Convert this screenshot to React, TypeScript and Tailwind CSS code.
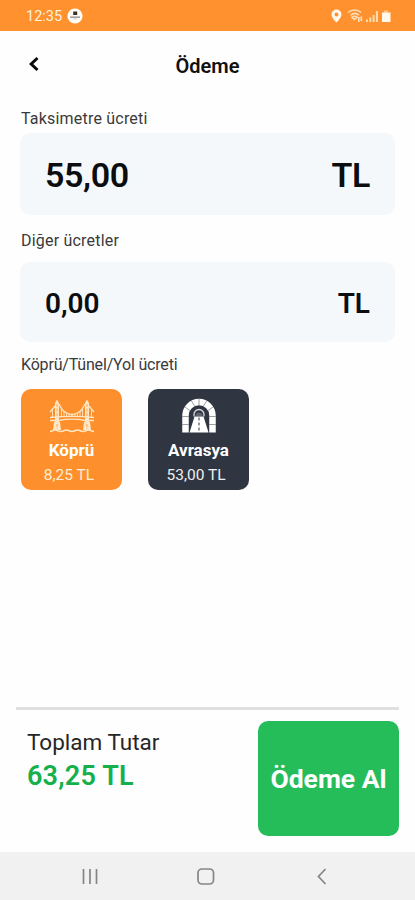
import React from "react";

interface FeeFieldProps {
  label: string;
  amount: string;
  className: string;
  textClassName: string;
}

interface TollCardProps {
  name: string;
  price: string;
  className: string;
  priceClassName: string;
  icon: React.ReactNode;
}

const StatusBar: React.FC = () => (
  <div className="flex h-[31px] items-center bg-[#ff922e] pl-[26px] pr-6 text-[#fff1dc]">
    <span className="pt-[3px] text-[14.5px] leading-none">12:35</span>
    <svg className="ml-[5px] mt-px" width="16" height="16" viewBox="0 0 16 16">
      <circle cx="8" cy="8" r="7.6" fill="#fffdf8" />
      <path d="M6.2 3.5h4V7h-4z" fill="#3b3224" />
      <path d="M3 8.5h10v1.3H3z" fill="#888" />
      <path d="M6 11h4" stroke="#d8d0c4" />
    </svg>
    <svg className="ml-auto" width="60" height="16" viewBox="0 0 60 16">
      <path
        d="M5.5 1.5a5 5 0 0 0-5 5c0 3.5 5 8 5 8s5-4.5 5-8a5 5 0 0 0-5-5zm0 3a2 2 0 1 1 0 4 2 2 0 0 1 0-4z"
        fill="#fff9ec"
        fillRule="evenodd"
      />
      <g fill="none" stroke="#ffe0b8" strokeWidth="1.5">
        <path d="M17 4.500c4-3.400 9.500-3.400 13 0" />
        <path d="M19.500 7.200c2.600-2.200 6-2.200 8.500 0" />
        <path d="M21 9.200c1.500-1.200 3.500-1.200 5 0l-2.500 2.300z" />
        <path d="M27.800 9v5M30.300 8.500v4.500" strokeWidth="1.7" />
      </g>
      <path
        d="M35 11.500h2V14h-2zM38.300 9.500h2V14h-2zM41.600 7h2v7h-2zM44.900 3h2v11h-2z"
        fill="#ffdcae"
      />
      <path d="M53 2.500h4v2h-4z" fill="#ffc98d" />
      <path d="M51 4.500h8.500V14H51z" fill="#fff9ec" />
    </svg>
  </div>
);

const FeeField: React.FC<FeeFieldProps> = ({
  label,
  amount,
  className,
  textClassName,
}) => (
  <>
    <p className="h-6 pl-px text-[16px] leading-6 tracking-[0.2px] text-[#3a3a3a]">
      {label}
    </p>
    <div
      className={`flex items-center justify-between rounded-[10px] bg-[#f4f8fb] px-[25px] font-semibold text-[#0b0d0e] ${className}`}
    >
      <span className={textClassName}>{amount}</span>
      <span className={textClassName}>TL</span>
    </div>
  </>
);

const BridgeIcon: React.FC = () => (
  <svg width="46" height="36" viewBox="0 0 46 36" fill="none" stroke="#ffe6c4">
    <g fill="#ffe6c4" stroke="none">
      <path d="M6 31V5l2-3.500L10 5v26zM36 31V5l2-3.500L40 5v26z" />
      <path d="M5 24h6l1 8H4zM35 24h6l1 8h-8z" />
    </g>
    <path d="M8 6v14M38 6v14M8 26v5M38 26v5" stroke="#fda653" strokeDasharray="3 1.500" />
    <path
      d="M10 6c3 7 7 10.500 13 10.500S33 13 36 6M6 8 1 14M40 8l5 6"
      strokeWidth="1.300"
    />
    <path
      d="M1 19.500c14-1.500 30-1.500 44 0M1 22.500h6M39 22.500h6M10 22.500c8-1.700 18-1.700 26 0"
      strokeWidth="1.300"
    />
    <path
      d="M3.500 12v7M12.500 10v9M15 13v5.500M17.500 15v3.500M20 16v3M23 16v3M26 16v3M28.500 15v3.500M31 13v5.500M33.500 10v9M42.500 12v7"
      strokeWidth="0.900"
    />
    <path
      d="M1 33.500c2.500 0 3-1.500 5-1.500s3 1.500 6 1.500 3-1.500 5.500-1.500 3 1.500 5.500 1.500 3-1.500 5.500-1.500 3 1.500 5.500 1.500 3-1.500 5.500-1.500 2.500 1.500 5.500 1.500"
      strokeWidth="1.400"
    />
  </svg>
);

const TunnelIcon: React.FC = () => (
  <svg width="36" height="36" viewBox="0 0 36 36" fill="none">
    <path d="M4.500 34.500V17.500a13.500 13.500 0 0 1 27 0v17" stroke="#fff" strokeWidth="6.500" />
    <path
      d="M1 26.500h7M28 26.500h7M1 18.500h7M28 18.500h7M4 9l5 3.500M32 9l-5 3.500M10.500 3l3 5M25.500 3l-3 5M18 1v6"
      stroke="#8d929a"
      strokeWidth="0.900"
    />
    <path d="M13 18.500v-2a5 5 0 0 1 10 0v2" stroke="#d9dbde" strokeWidth="1.300" />
    <path d="M14.500 18a3.500 3.500 0 0 1 7 0z" fill="#5d646e" />
    <path d="M13.500 18.500h9l5 16h-19z" fill="#fff" />
    <path d="M18 19.500v15" stroke="#2f3641" strokeDasharray="3 2" />
  </svg>
);

const TollCard: React.FC<TollCardProps> = ({
  name,
  price,
  className,
  priceClassName,
  icon,
}) => (
  <button
    className={`flex h-[101px] w-[101px] flex-col items-center rounded-[10px] pt-[9px] text-white ${className}`}
  >
    {icon}
    <span className="mt-[6px] text-[17px] font-bold leading-5">{name}</span>
    <span className={`mt-[5px] pr-[5px] leading-5 ${priceClassName}`}>{price}</span>
  </button>
);

const App: React.FC = () => {
  return (
    <div className="flex h-[900px] w-[415px] flex-col overflow-hidden bg-[#fefefe] font-['Roboto','Noto_Sans',sans-serif]">
      <StatusBar />
      <header className="grid h-[70px] grid-cols-3 items-center px-7">
        <svg width="12" height="16" viewBox="0 0 12 16" className="mb-1" fill="none">
          <path d="M9.500 2 3.200 8l6.300 6" stroke="#0b0b0b" strokeWidth="3" />
        </svg>
        <h1 className="text-center text-[20px] font-semibold text-[#101010]">
          Ödeme
        </h1>
      </header>

      <main className="flex-1 px-5 pt-[6px]">
        <FeeField
          label="Taksimetre ücreti"
          amount="55,00"
          className="mb-[14px] mt-[2px] h-[82px] pt-[3px]"
          textClassName="text-[34px] tracking-[-0.4px]"
        />
        <FeeField
          label="Diğer ücretler"
          amount="0,00"
          className="mb-[10px] mt-[9px] h-[80px] pt-[3px]"
          textClassName="text-[28px]"
        />
        <p className="h-6 pl-px text-[16px] leading-[25px] tracking-[-0.18px] text-[#3a3a3a]">
          Köprü/Tünel/Yol ücreti
        </p>
        <div className="mt-[13px] flex gap-[26px] pl-px">
          <TollCard
            name="Köprü"
            price="8,25 TL"
            className="bg-[#fd902c]"
            priceClassName="text-[15.500px] text-[#ffedd3]"
            icon={<BridgeIcon />}
          />
          <TollCard
            name="Avrasya"
            price="53,00 TL"
            className="bg-[#2f3641]"
            priceClassName="text-[15.500px] text-[#eef0f2]"
            icon={<TunnelIcon />}
          />
        </div>
      </main>

      <footer className="mx-4 flex h-[145px] items-start justify-between border-t-[3px] border-[#e0e0e0] pl-[11px] pt-[11px]">
        <div className="pt-[5px]">
          <p className="text-[22.500px] leading-8 text-[#262626]">Toplam Tutar</p>
          <p className="mt-[2px] text-[27px] font-semibold leading-8 tracking-[0.2px] text-[#15b04c]">
            63,25 TL
          </p>
        </div>
        <button className="h-[115px] w-[141px] rounded-[10px] bg-[#25bd59] pt-px text-[26.500px] font-bold text-white">
          Ödeme Al
        </button>
      </footer>

      <nav className="h-12 bg-[#f1f1f1]">
        <svg width="415" height="48" viewBox="0 0 415 48" fill="none" stroke="#858585" strokeWidth="1.700">
          <path d="M83.500 17v15M90 17v15M96.500 17v15" />
          <rect x="198" y="17" width="15.500" height="15" rx="4" />
          <path d="m325.500 17-7 7.500 7 7.500" />
        </svg>
      </nav>
    </div>
  );
};

export default App;
